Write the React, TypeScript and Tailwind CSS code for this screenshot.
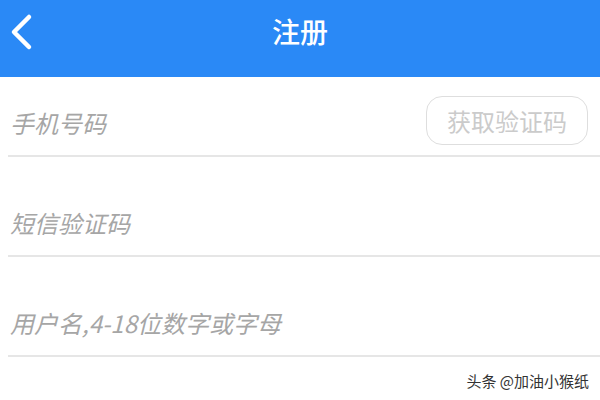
import React from "react";

const font = { fontFamily: '"Noto Sans CJK SC", "Noto Sans", sans-serif' };

function Row({ label, height, children }: { label: string; height: string; children?: React.ReactNode }) {
  return (
    <div className={`${height} ml-[8px] flex flex-col justify-end border-b-2 border-[#e6e6e6]`}>
      <div className="h-[64px] flex items-center justify-between pl-[2px] pr-[12px]">
        <span className="text-[24px] leading-[24px] italic text-[#a6a6a6]">{label}</span>
        {children}
      </div>
    </div>
  );
}

export default function App() {
  return (
    <div className="relative w-[600px] h-[400px] bg-white overflow-hidden" style={font}>
      <div className="h-[77px] bg-[#2a89f6] flex items-center justify-center relative">
        <svg className="absolute left-[8px] top-[13px]" width="28" height="40" viewBox="0 0 28 40">
          <polyline points="21,4 6,19 21,34" fill="none" stroke="white" strokeWidth="4.5" strokeLinecap="round" strokeLinejoin="round" />
        </svg>
        <span className="text-white text-[28px] leading-[28px] font-medium -mt-[15px]">注册</span>
      </div>
      <Row label="手机号码" height="h-[80px]">
        <div className="w-[162px] h-[49px] mb-[5px] rounded-[16px] border-[1.5px] border-[#dedede] flex items-center justify-center text-[24px] leading-[24px] text-[#cbcbcb]">
          获取验证码
        </div>
      </Row>
      <Row label="短信验证码" height="h-[100px]" />
      <Row label="用户名,4-18位数字或字母" height="h-[100px]" />
      <div className="absolute right-[11px] top-[371px] text-[15px] leading-[20px] text-[#333333]">头条 @加油小猴纸</div>
    </div>
  );
}
